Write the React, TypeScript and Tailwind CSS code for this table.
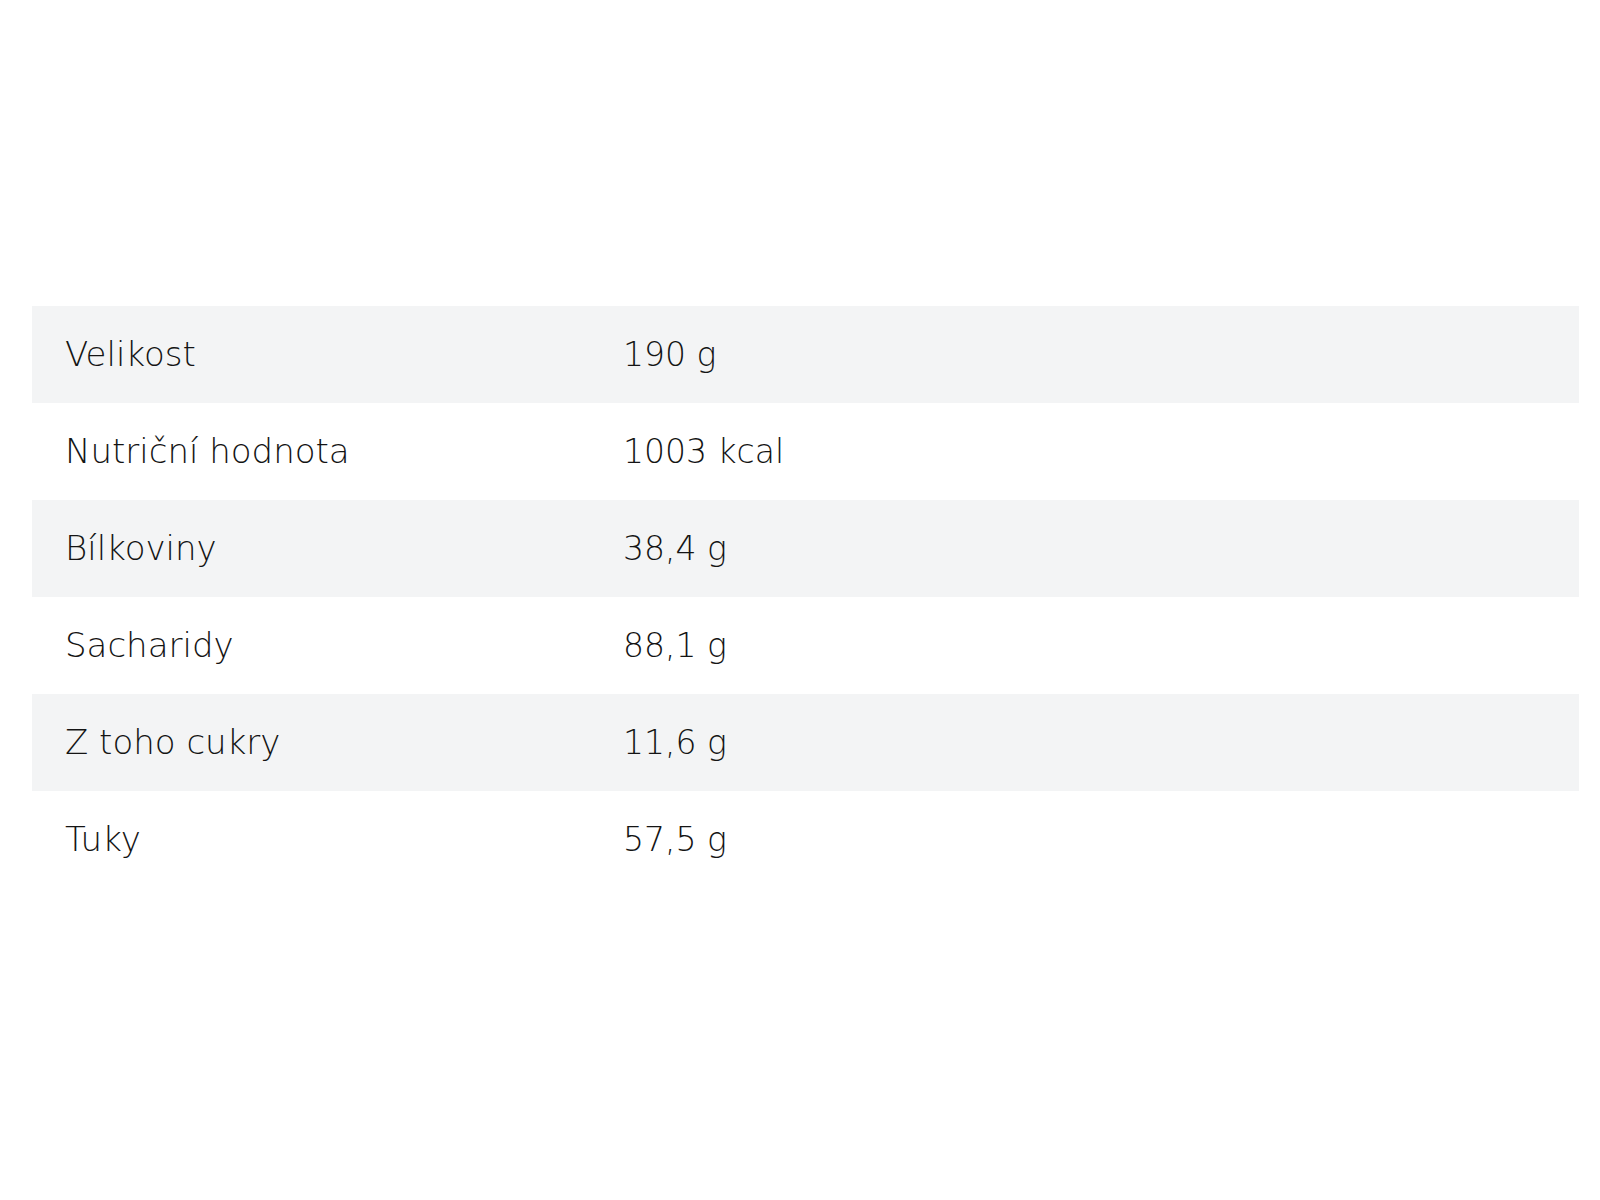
const ROWS: [string, string][] = [
  ["Velikost", "190 g"],
  ["Nutriční hodnota", "1003 kcal"],
  ["Bílkoviny", "38,4 g"],
  ["Sacharidy", "88,1 g"],
  ["Z toho cukry", "11,6 g"],
  ["Tuky", "57,5 g"],
];

export default function App() {
  return (
    <div className="min-h-[1200px] w-[1600px] bg-white pt-[306px] pl-[32px] font-['DejaVu_Sans',sans-serif] text-[#141414]">
      <div className="w-[1547px]">
        {ROWS.map(([label, value], i) => (
          <div
            key={label}
            className={`flex h-[97px] items-center font-extralight ${i % 2 === 0 ? "bg-[#f3f4f5]" : "bg-white"}`}
          >
            <div className="w-[591px] pl-[33px] text-[34px]">{label}</div>
            <div className="text-[33px]">{value}</div>
          </div>
        ))}
      </div>
    </div>
  );
}
